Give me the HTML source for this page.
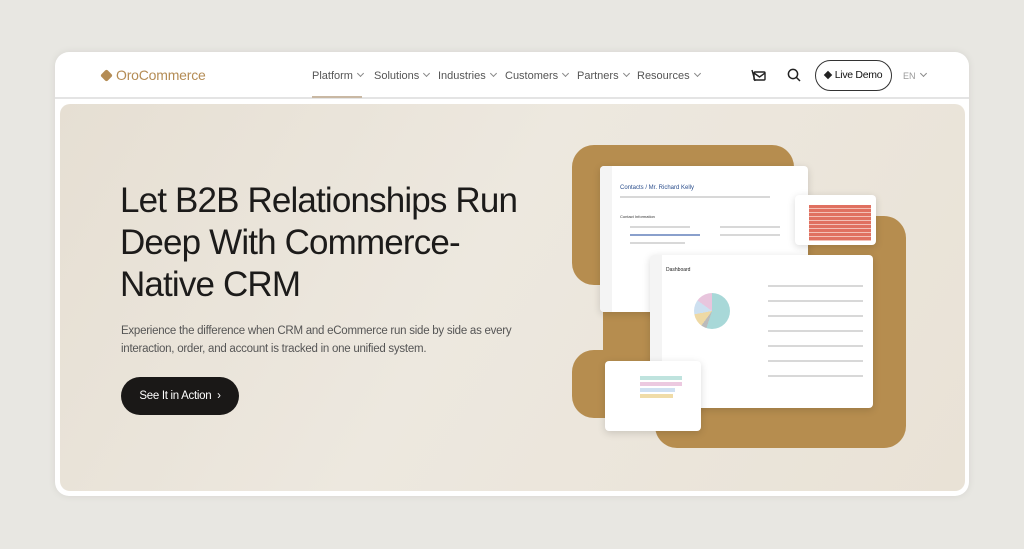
<!DOCTYPE html>
<html><head><meta charset="utf-8"><style>
*{margin:0;padding:0;box-sizing:border-box}
body{width:1024px;height:549px;background:#e8e7e2;font-family:"Liberation Sans",sans-serif;position:relative;overflow:hidden}
.card{position:absolute;left:55px;top:52px;width:914px;height:444px;background:#fff;border-radius:14px;box-shadow:0 0 8px rgba(0,0,0,.08)}
.hdrline{position:absolute;left:55px;top:97px;width:914px;height:2px;background:#e4e4e4}
.logo{position:absolute;left:102px;top:67px;color:#b48c55;font-size:14px;letter-spacing:-.2px}
.nav{position:absolute;top:70px;font-size:11px;color:#555}
.nav span::after{content:"";display:inline-block;width:4px;height:4px;border-right:1px solid #888;border-bottom:1px solid #888;transform:rotate(45deg);margin-left:5px;position:relative;top:-3px}
.uline{position:absolute;left:312px;top:96px;width:50px;height:2px;background:#c9b8a3}
.hero{position:absolute;left:60px;top:104px;width:905px;height:387px;border-radius:10px;background:linear-gradient(120deg,#e6dfd3 0%,#ede8df 45%,#e9e2d6 100%)}
h1{position:absolute;left:120px;top:180px;font-size:35px;line-height:42px;font-weight:400;color:#1c1b1a;letter-spacing:-.85px}
p{position:absolute;left:121px;top:322px;font-size:11.5px;line-height:18px;color:#555;letter-spacing:-.25px}
.btn{position:absolute;left:121px;top:377px;width:118px;height:38px;border-radius:19px;background:#1a1817;color:#fff;font-size:11.5px;line-height:38px;text-align:center;letter-spacing:-.3px}
.g{position:absolute;background:#b68d4f}
.win{position:absolute;background:#fff;border-radius:4px;box-shadow:0 2px 8px rgba(0,0,0,.15);overflow:hidden}
.bar{position:absolute;height:2px;background:#d8d8d8}
</style></head><body>
<div class="card"></div>
<div class="hdrline"></div>
<div class="logo"><span style="display:inline-block;width:9px;height:9px;background:#b48c55;transform:rotate(45deg);margin-right:5px;border-radius:2px"></span>OroCommerce</div>
<div class="nav" style="left:312px"><span>Platform</span></div>
<div class="nav" style="left:374px"><span>Solutions</span></div>
<div class="nav" style="left:438px"><span>Industries</span></div>
<div class="nav" style="left:505px"><span>Customers</span></div>
<div class="nav" style="left:577px"><span>Partners</span></div>
<div class="nav" style="left:637px"><span>Resources</span></div>
<div class="uline"></div>
<svg style="position:absolute;left:751px;top:68px" width="16" height="15" viewBox="0 0 16 15" fill="none" stroke="#222" stroke-width="1.4"><rect x="3" y="4" width="11" height="8" rx="1"/><path d="M3 5l5.5 4 5.5-4M1 2l3 11"/></svg>
<svg style="position:absolute;left:787px;top:68px" width="14" height="14" viewBox="0 0 14 14" fill="none" stroke="#222" stroke-width="1.5"><circle cx="6" cy="6" r="4.6"/><path d="M9.5 9.5l3.5 3.5"/></svg>
<div style="position:absolute;left:815px;top:60px;width:77px;height:31px;border:1.2px solid #333;border-radius:16px;font-size:10.5px;line-height:29px;text-align:center;color:#111;letter-spacing:-.3px"><span style="display:inline-block;width:6px;height:6px;background:#222;transform:rotate(45deg);margin-right:4px"></span>Live Demo</div>
<div class="nav" style="left:903px;top:71px;font-size:9px;color:#999"><span>EN</span></div>
<div class="hero"></div>
<h1>Let B2B Relationships Run<br>Deep With Commerce-<br>Native CRM</h1>
<p>Experience the difference when CRM and eCommerce run side by side as every<br>interaction, order, and account is tracked in one unified system.</p>
<div class="btn">See It in Action &nbsp;›</div>
<div class="g" style="left:572px;top:145px;width:222px;height:140px;border-radius:22px"></div>
<div class="g" style="left:603px;top:270px;width:100px;height:95px"></div>
<div class="g" style="left:572px;top:350px;width:130px;height:68px;border-radius:22px"></div>
<div class="g" style="left:655px;top:216px;width:251px;height:232px;border-radius:22px"></div>
<div class="win" style="left:600px;top:166px;width:208px;height:146px">
 <div style="position:absolute;left:0;top:0;width:12px;height:146px;background:#f4f4f4"></div>
 <div style="position:absolute;left:20px;top:19px;font-size:6px;color:#2b4e8c">Contacts / Mr. Richard Kelly</div>
 <div class="bar" style="left:20px;top:30px;width:150px"></div>
 <div style="position:absolute;left:20px;top:48px;font-size:4px;color:#333">Contact Information</div>
 <div class="bar" style="left:30px;top:60px;width:60px"></div><div class="bar" style="left:30px;top:68px;width:70px;background:#8aa0cc"></div><div class="bar" style="left:30px;top:76px;width:55px"></div><div class="bar" style="left:120px;top:60px;width:60px"></div><div class="bar" style="left:120px;top:68px;width:60px"></div>
</div>
<div class="win" style="left:650px;top:255px;width:223px;height:153px">
 <div style="position:absolute;left:0;top:0;width:12px;height:153px;background:#f4f4f4"></div>
 <div style="position:absolute;left:16px;top:12px;font-size:5px;color:#222">Dashboard</div>
 <div style="position:absolute;left:44px;top:38px;width:36px;height:36px;border-radius:50%;background:conic-gradient(#a8d8d8 0 55%,#bbb 55% 60%,#eed9a5 60% 72%,#cde0f0 72% 85%,#e8c5dd 85%)"></div>
 <div class="bar" style="left:118px;top:30px;width:95px"></div><div class="bar" style="left:118px;top:45px;width:95px"></div><div class="bar" style="left:118px;top:60px;width:95px"></div><div class="bar" style="left:118px;top:75px;width:95px"></div><div class="bar" style="left:118px;top:90px;width:95px"></div><div class="bar" style="left:118px;top:105px;width:95px"></div><div class="bar" style="left:118px;top:120px;width:95px"></div>
</div>
<div class="win" style="left:795px;top:195px;width:81px;height:50px">
 <div style="position:absolute;left:14px;top:10px;width:62px;height:36px;background:repeating-linear-gradient(#e07060 0 3px,#f3c0b6 3px 4px)"></div>
</div>
<div class="win" style="left:605px;top:361px;width:96px;height:70px">
 <div style="position:absolute;left:35px;top:15px;width:42px;height:4px;background:#bfe3de"></div>
 <div style="position:absolute;left:35px;top:21px;width:42px;height:4px;background:#ecc9e0"></div>
 <div style="position:absolute;left:35px;top:27px;width:35px;height:4px;background:#cfe0f2"></div>
 <div style="position:absolute;left:35px;top:33px;width:33px;height:4px;background:#f0dca8"></div>
</div>
</body></html>
